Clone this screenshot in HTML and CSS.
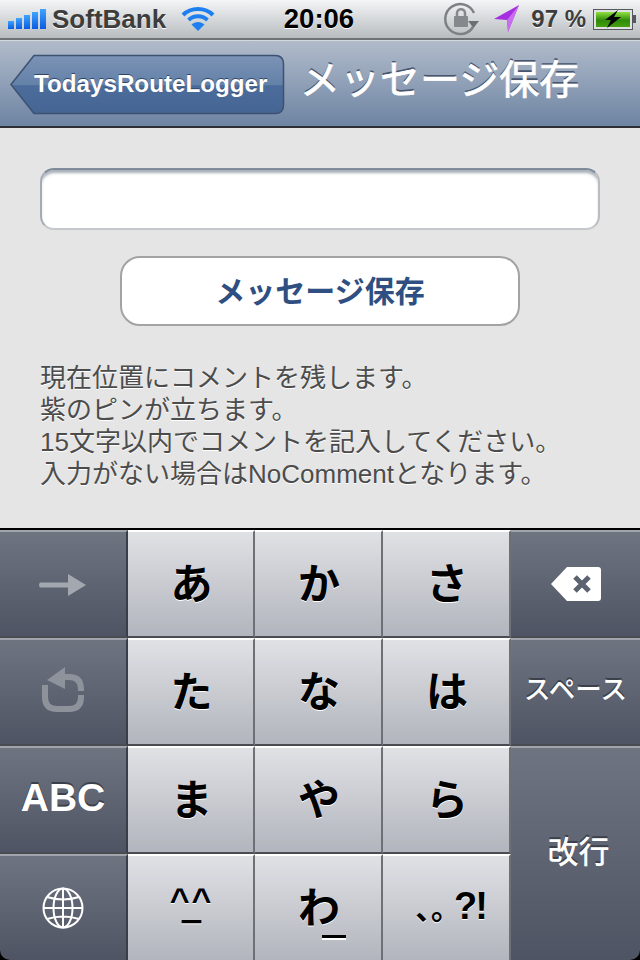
FILE: index.html
```html
<!DOCTYPE html>
<html lang="ja">
<head>
    <meta charset="UTF-8">
    <meta name="viewport" content="width=device-width, initial-scale=1.0">
    <title>メッセージ保存</title>
    <link rel="stylesheet" href="styles.css">
</head>
<body>
    <div class="status-bar">
        <div class="status-left">
            <svg class="signal" width="38" height="22" viewBox="0 0 38 22">
                <defs>
                    <linearGradient id="sig" x1="0" y1="0" x2="0" y2="1">
                        <stop offset="0" stop-color="#3fa4ff"/>
                        <stop offset="1" stop-color="#0a5ce0"/>
                    </linearGradient>
                </defs>
                <rect x="0" y="13" width="6" height="8" fill="url(#sig)"/>
                <rect x="8" y="10" width="6" height="11" fill="url(#sig)"/>
                <rect x="16" y="7" width="6" height="14" fill="url(#sig)"/>
                <rect x="24" y="4" width="6" height="17" fill="url(#sig)"/>
                <rect x="32" y="1" width="6" height="20" fill="url(#sig)"/>
            </svg>
            <span class="carrier">SoftBank</span>
            <svg class="wifi" width="34" height="26" viewBox="0 0 34 26">
                <path d="M2 9 C10 1 24 1 32 9" fill="none" stroke="#1e80f0" stroke-width="4"/>
                <path d="M7.500 14 C13 9 21 9 26.500 14" fill="none" stroke="#1e80f0" stroke-width="4"/>
                <path d="M17 25 L10.500 18.500 C14 15 20 15 23.500 18.500 Z" fill="#1e80f0"/>
            </svg>
        </div>
        <div class="clock">20:06</div>
        <div class="status-right">
            <svg class="rotation" width="36" height="36" viewBox="0 0 36 36">
                <path d="M29 26 A15 15 0 1 1 30 12" fill="none" stroke="#7d8085" stroke-width="2.500"/>
                <path d="M24 20 L35 20 L29.500 27 Z" fill="#6c7075"/>
                <rect x="10" y="15" width="14" height="11" rx="1" fill="#85888c"/>
                <path d="M13 15 V12 C13 7 21 7 21 12 V15" fill="none" stroke="#85888c" stroke-width="2.500"/>
            </svg>
            <svg class="location" width="26" height="28" viewBox="0 0 26 28">
                <path d="M25 0 L0 14 L13 15 L14 27 Z" fill="#a52ee0"/>
                <path d="M25 0 L13 15 L14 27 Z" fill="#c86ff0"/>
            </svg>
            <span class="battery-text">97 %</span>
            <div class="battery">
                <div class="battery-fill">
                    <svg width="20" height="18" viewBox="0 0 20 18">
                        <path d="M15 0 L2 10 L8 10 L4 18 L18 7 L11 7 Z" fill="#000"/>
                    </svg>
                </div>
            </div>
            <div class="battery-tip"></div>
        </div>
    </div>

    <div class="nav-bar">
        <div class="back-btn">
            <svg class="back-shape" width="275" height="61" viewBox="0 0 275 61">
                <defs>
                    <linearGradient id="back" x1="0" y1="0" x2="0" y2="1">
                        <stop offset="0" stop-color="#7b93b6"/>
                        <stop offset="0.5" stop-color="#6481a8"/>
                        <stop offset="0.52" stop-color="#4c6d9c"/>
                        <stop offset="1" stop-color="#456693"/>
                    </linearGradient>
                </defs>
                <path d="M24 1.500 H265 Q273.500 1.500 273.500 10 V51 Q273.500 59.500 265 59.500 H24 L1 30.500 Z" fill="url(#back)" stroke="#3c5270" stroke-width="1.500"/>
            </svg>
            <span class="back-label">TodaysRouteLogger</span>
        </div>
        <div class="nav-title">メッセージ保存</div>
    </div>

    <div class="content">
        <div class="text-field"></div>
        <div class="save-btn">メッセージ保存</div>
        <p class="note">現在位置にコメントを残します。<br>紫のピンが立ちます。<br>15文字以内でコメントを記入してください。<br>入力がない場合はNoCommentとなります。</p>
    </div>

    <div class="keyboard">
        <div class="key dark arrow-key">
            <svg width="50" height="24" viewBox="0 0 50 24">
                <path d="M2 9.500 H30 V1 L48 12 L30 23 V14.500 H2 Q0 12 2 9.500 Z" fill="#a3a8b0"/>
            </svg>
        </div>
        <div class="key light">あ</div>
        <div class="key light">か</div>
        <div class="key light">さ</div>
        <div class="key dark delete-key">
            <svg width="52" height="34" viewBox="0 0 52 34">
                <path d="M16 0 H47 Q50 0 50 3 V31 Q50 34 47 34 H16 L0 17 Z" fill="#fff"/>
                <path d="M24 10 L38 24 M38 10 L24 24" stroke="#5b6270" stroke-width="5"/>
            </svg>
        </div>

        <div class="key dark undo-key">
            <svg width="44" height="46" viewBox="0 0 44 46">
                <path d="M4 18 V30 Q4 42 16 42 H28 Q40 42 40 30 V28 M40 24 V22 Q40 10 28 10 H20" fill="none" stroke="#8d929b" stroke-width="6"/>
                <path d="M24 0 L6 13 L24 22 Z" fill="#8d929b"/>
            </svg>
        </div>
        <div class="key light">た</div>
        <div class="key light">な</div>
        <div class="key light">は</div>
        <div class="key dark space">スペース</div>

        <div class="key dark abc">ABC</div>
        <div class="key light">ま</div>
        <div class="key light">や</div>
        <div class="key light">ら</div>
        <div class="key dark enter">改行</div>

        <div class="key dark globe">
            <svg width="42" height="42" viewBox="0 0 42 42" fill="none" stroke="#fff" stroke-width="2">
                <circle cx="21" cy="21" r="19.500"/>
                <ellipse cx="21" cy="21" rx="9.500" ry="19.500"/>
                <path d="M21 1.500 V40.500 M1.500 21 H40.500 M5 10 Q21 15 37 10 M5 32 Q21 27 37 32"/>
            </svg>
        </div>
        <div class="key light smiley">
            <span class="eyes">^^</span>
            <span class="mouth">_</span>
        </div>
        <div class="key light wa">わ</div>
        <div class="key light punct">､｡<span class="marks">?!</span></div>
    </div>
</body>
</html>
```

FILE: styles.css
```css
* {
    box-sizing: border-box;
}

body {
    margin: 0;
    width: 640px;
    height: 960px;
    overflow: hidden;
    display: flex;
    flex-direction: column;
    font-family: "Liberation Sans", "Noto Sans CJK JP", sans-serif;
    background: #e5e5e5;
}

.status-bar {
    height: 40px;
    padding: 0 4px 0 8px;
    display: grid;
    grid-template-columns: 1fr auto 1fr;
    align-items: center;
    background: linear-gradient(#f3f5f6, #b9bcbf);
    border-bottom: 2px solid #6e7276;
}

.status-left {
    display: flex;
    align-items: center;
}

.carrier {
    margin-left: 6px;
    font-size: 26px;
    font-weight: bold;
    color: #3d3d3d;
    text-shadow: 0 1px 0 #fff;
}

.wifi {
    margin-left: 15px;
}

.clock {
    padding-right: 6px;
    font-size: 27.500px;
    font-weight: bold;
    color: #000;
    text-shadow: 0 1px 0 #fff;
}

.status-right {
    display: flex;
    align-items: center;
    justify-content: flex-end;
}

.rotation {
    margin-right: 1px;
}

.location {
    margin-left: 13px;
}

.battery-text {
    margin-left: 11px;
    font-size: 24px;
    font-weight: bold;
    color: #3d3d3d;
    text-shadow: 0 1px 0 #fff;
}

.battery {
    margin-left: 7px;
    width: 40px;
    height: 21px;
    padding: 2px;
    border: 1px solid #55585c;
    background: #dfe1e2;
}

.battery-fill {
    height: 100%;
    display: flex;
    align-items: center;
    justify-content: center;
    background: linear-gradient(#90e040, #2f8a08 55%, #45a010);
}

.battery-tip {
    width: 3px;
    height: 8px;
    background: #55585c;
}

.nav-bar {
    height: 88px;
    padding: 13px 0 0 10px;
    display: flex;
    align-items: flex-start;
    background: linear-gradient(#b1bbca, #6d84a3);
    border-top: 1px solid #d3d8df;
    border-bottom: 2px solid #2d3033;
}

.back-btn {
    position: relative;
    width: 274px;
    height: 60px;
    flex: none;
    padding-left: 24px;
    display: flex;
    align-items: center;
}

.back-shape {
    position: absolute;
    top: 0;
    left: 0;
}

.back-label {
    position: relative;
    font-size: 24.200px;
    font-weight: bold;
    color: #fff;
    text-shadow: 0 -1px 0 #2f4566;
}

.nav-title {
    margin: 0 0 0 16px;
    font-size: 40px;
    font-weight: normal;
    line-height: 52px;
    white-space: nowrap;
    color: #fff;
    -webkit-text-stroke: 0.7px #fff;
    text-shadow: 0 -2px 0 #47566e;
}

.content {
    height: 400px;
    padding: 40px 40px 0;
}

.text-field {
    width: 560px;
    height: 62px;
    background: #fff;
    border: 2px solid #c4c7cb;
    border-top-color: #7f8b9b;
    border-left-color: #a4abb5;
    border-right-color: #b9bcc1;
    border-radius: 14px;
    box-shadow: inset 0 4px 3px -1px #a7aeb8;
}

.save-btn {
    width: 400px;
    height: 70px;
    margin: 26px 0 0 80px;
    padding-bottom: 5px;
    display: flex;
    align-items: center;
    justify-content: center;
    background: #fff;
    border: 2px solid #a3a3a3;
    border-radius: 20px;
    font-size: 30px;
    font-weight: bold;
    color: #2f4f82;
}

.note {
    margin: 36px 0 0;
    font-size: 26px;
    line-height: 32px;
    white-space: nowrap;
    color: #4c4c4c;
    text-shadow: 0 1px 0 #fff;
}

.keyboard {
    flex: 1;
    display: grid;
    grid-template-columns: 128px 127px 128px 128px 129px;
    grid-template-rows: 108px 108px 108px 106px;
    background: #000;
    border-top: 2px solid #000;
}

.key {
    display: flex;
    align-items: center;
    justify-content: center;
    font-size: 42px;
    font-weight: bold;
    border-bottom: 2px solid #4a4c52;
}

.light {
    padding: 0 0 8px 2px;
    color: #000;
    background: linear-gradient(#e0e1e5, #b2b5bd);
    border-top: 2px solid #fff;
    border-right: 2px solid #6e7075;
    text-shadow: 0 1px 0 #fff;
}

.dark {
    color: #fff;
    background: linear-gradient(#6e7480, #4e5463);
    border-top: 2px solid #a0a4ac;
    border-right: 2px solid #3a3e48;
    text-shadow: 0 -2px 0 #3c404a;
}

.key:nth-child(5n) {
    border-right: 0;
}

.key:nth-last-child(-n+4) {
    border-bottom: 0;
}

.arrow-key {
    padding-top: 2px;
}

.undo-key {
    padding-bottom: 4px;
}

.delete-key {
    padding-left: 3px;
}

.space {
    padding-bottom: 10px;
    font-size: 26.500px;
    font-weight: 500;
}

.abc {
    padding-bottom: 4px;
    font-size: 39px;
}

.enter {
    grid-column: 5;
    grid-row: 3 / span 2;
    padding: 0 0 10px 6px;
    font-size: 31px;
    font-weight: 500;
    border-bottom: 0;
    border-bottom-right-radius: 10px;
}

.globe {
    border-bottom-left-radius: 10px;
}

.smiley {
    flex-direction: column;
    padding-bottom: 19px;
    font-size: 34px;
}

.eyes {
    height: 22px;
    line-height: 36px;
    letter-spacing: 2px;
}

.mouth {
    height: 22px;
    margin-top: -9px;
    line-height: 22px;
    text-shadow: 0 1px 0 #000, 0 2px 0 #000, 0 3px 0 #fff;
}

.wa {
    position: relative;
}

/* long-vowel bar under the wa key */
.wa::after {
    content: "";
    position: absolute;
    left: 67px;
    top: 79px;
    width: 24px;
    height: 3px;
    background: #000;
    box-shadow: 0 2px 0 #fff;
}

.punct {
    padding: 0 0 4px 10px;
    font-size: 30px;
}

.marks {
    margin-left: 8px;
    font-size: 38px;
    letter-spacing: -2px;
}
```
